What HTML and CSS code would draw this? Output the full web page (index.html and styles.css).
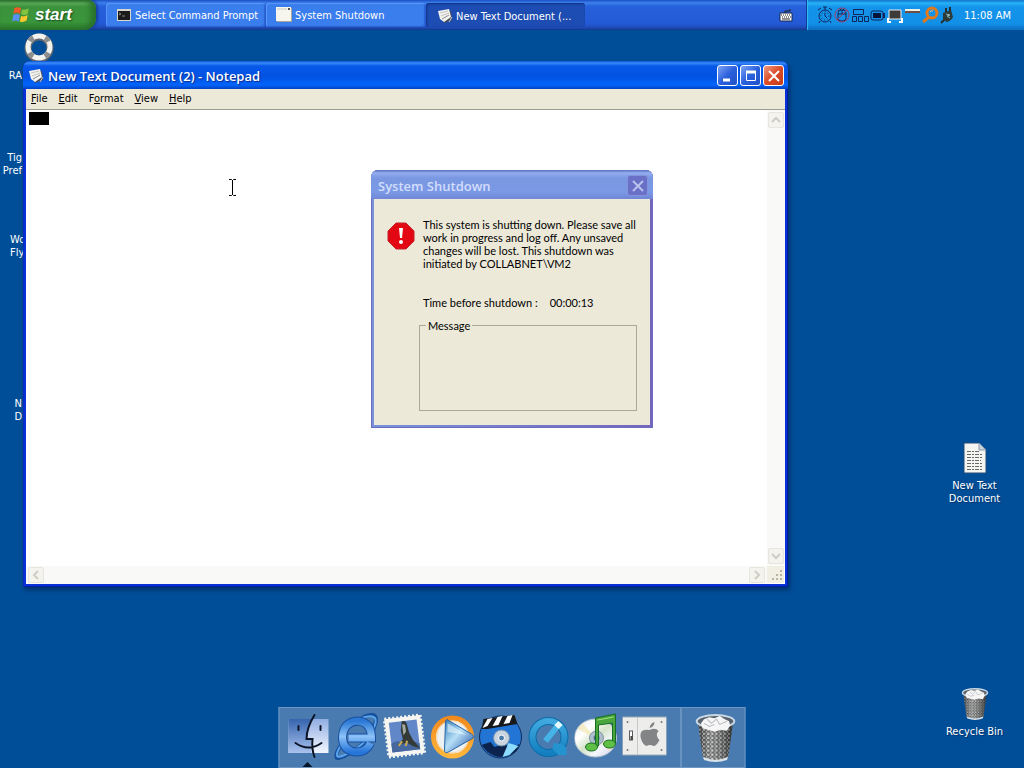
FILE: index.html
```
<!DOCTYPE html>
<html lang="en">
<head>
  <meta charset="UTF-8">
  <title>Desktop</title>
  <meta name="viewport" content="width=device-width, initial-scale=1.0">
  <link rel="stylesheet" href="styles.css">
</head>
<body>

  <!-- shared drawings -->
  <svg class="defs" width="0" height="0" aria-hidden="true">
    <defs>
      <pattern id="mesh" width="4" height="4" patternUnits="userSpaceOnUse">
        <rect width="4" height="4" fill="#c4c4c0"/>
        <path d="M0 0h3v2h-3zM2 2h2v2h-2z" fill="#303235"/>
      </pattern>
      <linearGradient id="shade">
        <stop offset="0" stop-color="#222" stop-opacity=".4"/>
        <stop offset=".35" stop-color="#fff" stop-opacity=".3"/>
        <stop offset="1" stop-color="#111" stop-opacity=".6"/>
      </linearGradient>
      <linearGradient id="face" x2="0" y2="1">
        <stop offset="0" stop-color="#3664ae"/>
        <stop offset="1" stop-color="#a9c2ed"/>
      </linearGradient>
      <linearGradient id="face2" x2="0" y2="1">
        <stop offset="0" stop-color="#91aee2"/>
        <stop offset="1" stop-color="#f2f6ff"/>
      </linearGradient>
      <linearGradient id="ie" x2="0" y2="1">
        <stop offset="0" stop-color="#2b78d5"/>
        <stop offset=".5" stop-color="#8cc2f8"/>
        <stop offset="1" stop-color="#2675d9"/>
      </linearGradient>
      <linearGradient id="orange" x2="0" y2="1">
        <stop offset="0" stop-color="#f08a1c"/>
        <stop offset="1" stop-color="#ffb63d"/>
      </linearGradient>
      <linearGradient id="play" x2="1" y2="1">
        <stop offset="0" stop-color="#2e78b5"/>
        <stop offset=".45" stop-color="#b7dff7"/>
        <stop offset="1" stop-color="#1b4fa5"/>
      </linearGradient>
      <linearGradient id="qt" x2="0" y2="1">
        <stop offset="0" stop-color="#3fa9df"/>
        <stop offset="1" stop-color="#137fc0"/>
      </linearGradient>
      <linearGradient id="cd" x2="1" y2="1">
        <stop offset="0" stop-color="#e2e8ef"/>
        <stop offset=".3" stop-color="#fff"/>
        <stop offset=".5" stop-color="#d5e4c8"/>
        <stop offset=".7" stop-color="#f4f7fc"/>
        <stop offset="1" stop-color="#cfc7e6"/>
      </linearGradient>
      <symbol id="trash" viewBox="0 0 40 46">
        <path d="M3 7l5 35q12 6 24 0l5-35z" fill="url(#mesh)"/>
        <path d="M3 7l5 35q12 6 24 0l5-35z" fill="url(#shade)"/>
        <path d="M8 41q12 6 24 0l-1 3q-11 4-22 0z" fill="#d9e3ea"/>
        <ellipse cx="20" cy="7" rx="18" ry="6" fill="#59636e" stroke="#c8d8e4" stroke-width="2"/>
        <path d="M6 9l3-4 5-2 5 1 5-2 5 3 4 2 1 4-3 5-6-1-6 2-6-2-5-1z" fill="#f6f6f6"/>
        <path d="M12 5l4 4 5-4 3 5 7-3M9 9l5 3 5-2" fill="none" stroke="#b9bcc0"/>
      </symbol>
      <symbol id="notepad" viewBox="0 0 16 16">
        <path d="M3 5l11-2 1 9-8 3z" fill="#4b4f55"/>
        <path d="M1 3l11-2 2 8-7 5-4-3z" fill="#f2f2f0"/>
        <path d="M3 5l8-2M4 8l8-3" stroke="#c4c2be"/>
        <path d="M5 11l7-4" stroke="#8d8b88"/>
        <path d="M12 14l3-5" stroke="#c9c9c9"/>
      </symbol>
    </defs>
  </svg>

  <header class="taskbar">
    <button class="start" type="button">
      <svg width="20" height="20" viewBox="0 0 18 18" aria-hidden="true">
        <path d="M3 3q3-2 6 0L8 8q-3-2-6 0z" fill="#ef5a26"/>
        <path d="M10 4q3 1 6-1l-1 5q-3 2-6 0z" fill="#82c341"/>
        <path d="M2 9q3-2 6 0l-1 6q-3-2-6 0z" fill="#5a90f0"/>
        <path d="M9 10q3 1 6-1l-1 5q-3 2-6 1z" fill="#fcc72c"/>
      </svg>
      start
    </button>

    <nav class="tasks" aria-label="Windows">
      <button class="task" type="button">
        <svg width="16" height="16" viewBox="0 0 16 16" aria-hidden="true">
          <rect x="1" y="2" width="14" height="12" fill="#d8d8d0"/>
          <rect x="2" y="4" width="12" height="9" fill="#1b1b1b"/>
          <path d="M3 6l2 1-2 1M6 9h3" fill="none" stroke="#888"/>
        </svg>
        <span>Select Command Prompt</span>
      </button>
      <button class="task" type="button">
        <svg width="16" height="16" viewBox="0 0 16 16" aria-hidden="true">
          <rect x="1" y="1" width="15" height="14" fill="#a7a698"/>
          <rect width="15" height="14" fill="#f7f6ee"/>
          <path d="M1 2h10" stroke="#e0dfd5" stroke-width="2"/>
          <path d="M12 2h2" stroke="#555" stroke-width="2"/>
        </svg>
        <span>System Shutdown</span>
      </button>
      <button class="task active" type="button">
        <svg width="16" height="16" aria-hidden="true"><use href="#notepad"/></svg>
        <span>New Text Document (...</span>
      </button>
    </nav>

    <svg class="keyboard" width="14" height="14" viewBox="0 0 14 14" aria-hidden="true">
      <path d="M6 5V3h5V1" fill="none" stroke="#222"/>
      <path d="M1 5h12v8H1z" fill="#fff" stroke="#17264d"/>
      <path d="M2 7h10M3 9h10" stroke="#222" stroke-dasharray="1 1"/>
      <path d="M3 11h8" stroke="#222"/>
    </svg>

    <div class="tray">
      <svg width="16" height="18" viewBox="0 0 16 18" fill="none" stroke="#10245a" aria-hidden="true">
        <circle cx="8" cy="10" r="6"/>
        <circle cx="8" cy="10" r="4" stroke-dasharray="1 2"/>
        <path d="M6 1h4M8 1v3M1 4l3-2M12 2l3 2M8 7v3l2 2M3 15l-1 2M13 15l1 2"/>
      </svg>
      <svg width="16" height="18" viewBox="0 0 16 18" fill="none" stroke="#10245a" aria-hidden="true">
        <rect x="4" y="4" width="8" height="11" rx="3"/>
        <path d="M4 8h8M8 4v4M5 2l2 2M11 2L9 4"/>
        <circle cx="8" cy="9" r="7" stroke="#a23a68"/>
        <path d="M3 14L13 4" stroke="#a23a68"/>
      </svg>
      <svg width="18" height="18" viewBox="0 0 18 18" fill="none" stroke="#10245a" aria-hidden="true">
        <path d="M2.500 3.500h10v5h-10zM1.500 10.500h4v5h-4zM7.500 10.500h4v5h-4zM13.500 10.500h4v5h-4z"/>
      </svg>
      <svg width="16" height="18" viewBox="0 0 16 18" aria-hidden="true">
        <rect x="1" y="5" width="12" height="9" rx="2" fill="none" stroke="#10245a"/>
        <rect x="3" y="7" width="8" height="5" fill="#06143a"/>
        <path d="M14 7v5" stroke="#10245a" stroke-width="2"/>
      </svg>
      <svg width="16" height="18" viewBox="0 0 16 18" aria-hidden="true">
        <path d="M2 4h12v9H2z" fill="#3c3b39" stroke="#eee"/>
        <path d="M1 12v4h3M15 12v4h-3" fill="none" stroke="#fff" stroke-width="2"/>
      </svg>
      <svg width="16" height="18" viewBox="0 0 16 18" aria-hidden="true">
        <path d="M1 4h15" stroke="#f0f0ea" stroke-width="2"/>
        <path d="M1 6h15" stroke="#6b5040" stroke-width="2"/>
      </svg>
      <svg width="18" height="18" viewBox="0 0 18 18" fill="none" stroke="#e07a1b" aria-hidden="true">
        <circle cx="11" cy="7" r="5" stroke-width="3"/>
        <path d="M8 11l-6 5" stroke-width="3"/>
        <path d="M9 6q1-2 3-1" stroke="#f9c07e"/>
      </svg>
      <svg width="14" height="18" viewBox="0 0 14 18" aria-hidden="true">
        <path d="M3 7l8-3 2 7q-2 4-6 5l-4-2z" fill="#2c3a38"/>
        <path d="M6 6V2M10 5V1M4 14l-3 3" stroke="#26302e" stroke-width="2"/>
        <path d="M6 8l4 1-3 1 3 2" fill="none" stroke="#93b9bd"/>
      </svg>
      <time class="clock">11:08 AM</time>
    </div>
  </header>

  <main class="desktop">
    <svg class="ring" width="30" height="30" viewBox="0 0 30 30" fill="none" aria-hidden="true">
      <circle cx="15" cy="15" r="11" stroke="#63686e" stroke-width="7"/>
      <circle cx="15" cy="14" r="11" stroke="#f2f2ef" stroke-width="5"/>
      <circle cx="15" cy="14" r="11" stroke="#8b8d8f" stroke-width="5" stroke-dasharray="5 12.300" stroke-dashoffset="-6"/>
    </svg>
    <p class="side-label side-a">RA</p>
    <p class="side-label side-b">Tig<br>Pref</p>
    <p class="side-label side-c">Wo<br>Fly</p>
    <p class="side-label side-d">N<br>D</p>

    <a class="shortcut document" href="#">
      <svg width="26" height="32" viewBox="0 0 26 32" aria-hidden="true">
        <path d="M2 1h15l7 7v23H2z" fill="#f4f4f1" stroke="#274d77"/>
        <path d="M17 1v7h7z" fill="#c6d3df" stroke="#8f9ba6"/>
        <path d="M5 9.500h12M5 12.500h15M5 15.500h16M5 18.500h14M5 21.500h16M5 24.500h15M5 27.500h16" stroke="#66686a" stroke-dasharray="4 1 2 1"/>
      </svg>
      <span>New Text<br>Document</span>
    </a>
    <a class="shortcut recycle" href="#">
      <svg width="28" height="32" aria-hidden="true"><use href="#trash"/></svg>
      <span>Recycle Bin</span>
    </a>

    <section class="window notepad" aria-labelledby="notepad-title">
      <div class="titlebar">
        <svg width="16" height="16" aria-hidden="true"><use href="#notepad"/></svg>
        <h1 id="notepad-title">New Text Document (2) - Notepad</h1>
        <button class="control" type="button" aria-label="Minimize">
          <svg width="18" height="18" viewBox="0 0 18 18"><path d="M4 13h7" stroke="#fff" stroke-width="3"/></svg>
        </button>
        <button class="control" type="button" aria-label="Maximize">
          <svg width="18" height="18" viewBox="0 0 18 18" fill="none" stroke="#fff"><path d="M4.500 4.500h9v9h-9z"/><path d="M4 5h10" stroke-width="3"/></svg>
        </button>
        <button class="control close" type="button" aria-label="Close">
          <svg width="18" height="18" viewBox="0 0 18 18"><path d="M4 4l10 10M14 4L4 14" stroke="#fff" stroke-width="2"/></svg>
        </button>
      </div>
      <nav class="menu" aria-label="Menu">
        <button type="button"><u>F</u>ile</button>
        <button type="button"><u>E</u>dit</button>
        <button type="button">F<u>o</u>rmat</button>
        <button type="button"><u>V</u>iew</button>
        <button type="button"><u>H</u>elp</button>
      </nav>
      <div class="editor">
        <textarea aria-label="Text" spellcheck="false"></textarea>
        <div class="scroll vertical">
          <button type="button" aria-label="Scroll up" disabled><svg width="12" height="12" viewBox="0 0 12 12"><path d="M2 8l4-4 4 4"/></svg></button>
          <button type="button" aria-label="Scroll down" disabled><svg width="12" height="12" viewBox="0 0 12 12"><path d="M2 4l4 4 4-4"/></svg></button>
        </div>
        <div class="scroll">
          <button type="button" aria-label="Scroll left" disabled><svg width="12" height="12" viewBox="0 0 12 12"><path d="M8 2L4 6l4 4"/></svg></button>
          <button type="button" aria-label="Scroll right" disabled><svg width="12" height="12" viewBox="0 0 12 12"><path d="M4 2l4 4-4 4"/></svg></button>
        </div>
        <svg class="grip" width="17" height="17" viewBox="0 0 17 17" aria-hidden="true">
          <path d="M13 4h2v2h-2zM9 8h2v2H9zM13 8h2v2h-2zM5 12h2v2H5zM9 12h2v2H9zM13 12h2v2h-2z" fill="#b8b4a2"/>
        </svg>
        <span class="block-cursor"></span>
      </div>
    </section>

    <section class="window dialog" role="dialog" aria-labelledby="dialog-title">
      <div class="titlebar">
        <h2 id="dialog-title">System Shutdown</h2>
        <button class="control" type="button" aria-label="Close" disabled>
          <svg width="18" height="18" viewBox="0 0 18 18"><path d="M4 4l10 10M14 4L4 14" stroke="#b9c1ee" stroke-width="2"/></svg>
        </button>
      </div>
      <div class="dialog-body">
        <svg width="28" height="28" viewBox="0 0 28 28" aria-hidden="true">
          <path d="M9 1h10l8 8v10l-8 8H9l-8-8V9z" fill="#e30613" stroke="#c3202a"/>
          <path d="M12 6h4l-1 10h-2z" fill="#fff"/>
          <circle cx="14" cy="20" r="2" fill="#fff"/>
        </svg>
        <div class="dialog-text">
          <p>This system is shutting down. Please save all<br>work in progress and log off. Any unsaved<br>changes will be lost. This shutdown was<br>initiated by COLLABNET\VM2</p>
          <p class="countdown"><span>Time before shutdown :</span><span>00:00:13</span></p>
          <fieldset>
            <legend>Message</legend>
          </fieldset>
        </div>
      </div>
    </section>

    <svg class="pointer" width="9" height="17" viewBox="0 0 9 17" fill="none" stroke="#000" aria-hidden="true">
      <path d="M1 .5h2.500l1 1 1-1H8M1 16.500h2.500l1-1 1 1H8M4.500 1v15"/>
    </svg>

    <nav class="dock" aria-label="Dock">
      <button class="running" type="button" aria-label="Finder">
        <svg width="44" height="48" viewBox="0 0 44 48">
          <path d="M2 7h40v34H2z" fill="url(#face2)"/>
          <path d="M2 7h23q-5 11-5 20h5v14H2z" fill="url(#face)"/>
          <path d="M28 3q-8 13-8 24h6q-1 10 2 18M9 31q13 9 26 0M12 14v4M34 14v4" fill="none" stroke="#0b1424" stroke-width="2" stroke-linecap="round"/>
        </svg>
      </button>
      <button type="button" aria-label="Internet Explorer">
        <svg width="44" height="48" viewBox="0 0 44 48" fill="none">
          <path d="M6 34Q-5 51 10 44 36 31 41 11 44-2 27 6" stroke="#164f9c" stroke-width="4"/>
          <path d="M6 34Q-3 49 10 43 36 31 41 11 43 1 27 6" stroke="#5ba4ea" stroke-width="2"/>
          <path d="M36 31q-4 9-14 9-14-1-14-15Q9 10 23 9q14 1 14 17H14" stroke="#194f9f" stroke-width="9"/>
          <path d="M36 31q-4 9-14 9-14-1-14-15Q9 10 23 9q14 1 14 17H14" stroke="url(#ie)" stroke-width="7"/>
        </svg>
      </button>
      <button type="button" aria-label="Mail">
        <svg width="44" height="48" viewBox="0 0 44 48">
          <g transform="rotate(-7 22 24)">
            <rect x="4" y="5" width="36" height="38" fill="#f5f5f1" stroke="#f5f5f1" stroke-width="3" stroke-dasharray="2 2"/>
            <rect x="8" y="9" width="28" height="30" fill="#6287c9"/>
            <path d="M8 30q8-4 12 2l5-4 11 5v6H8z" fill="#47689f"/>
            <path d="M21 9q5-1 5 5l1 7 3 8 6 9-7-3-5-4-10 1 6-5-1-9z" fill="#343a35"/>
            <path d="M21 12l3 1v7l-3 3z" fill="#a4aaa0"/>
            <path d="M24 29l-2 5M19 29l-4 4" stroke="#c9ab58" stroke-width="2"/>
          </g>
        </svg>
      </button>
      <button type="button" aria-label="Media Player">
        <svg width="44" height="48" viewBox="0 0 44 48">
          <circle cx="22" cy="25" r="19" fill="#edf1f2" stroke="url(#orange)" stroke-width="5"/>
          <circle cx="22" cy="25" r="16" fill="none" stroke="#f9d6a2"/>
          <path d="M15 9q1-3 4 0l22 13q4 3 0 5L18 40q-4 2-4-2z" fill="url(#play)" stroke="#2865a5"/>
          <path d="M17 11l19 12-19-3z" fill="#e7f8ff" opacity=".6"/>
        </svg>
      </button>
      <button type="button" aria-label="DVD">
        <svg width="44" height="48" viewBox="0 0 44 48">
          <circle cx="22" cy="25" r="21" fill="#2275d4" stroke="#102c57"/>
          <path d="M3 33l9-3 4 5 10-3 6 4 9-4-3 7q-16 12-30 0z" fill="#0c234d"/>
          <path d="M30 31l10 3-9 9-7 2z" fill="#8ddcff"/>
          <circle cx="23" cy="26" r="8" fill="#cad4df" stroke="#708eaf"/>
          <circle cx="23" cy="26" r="3" fill="#497ba8" stroke="#fff"/>
          <path d="M3 17L5 7 36 3l3 9L9 17z" fill="#17191d"/>
          <path d="M9 7l5-1-5 8-5 2zM19 5l5-1-4 9-6 1zM29 4l5-1-3 8-6 1z" fill="#fff"/>
        </svg>
      </button>
      <button type="button" aria-label="QuickTime">
        <svg width="44" height="48" viewBox="0 0 44 48" fill="none">
          <circle cx="22" cy="25" r="16" stroke="#0d6ba8" stroke-width="8"/>
          <circle cx="22" cy="25" r="16" stroke="url(#qt)" stroke-width="6"/>
          <path d="M27 31l8 1 5 4v7h-8l-6-6z" fill="#2494d0"/>
          <path d="M19 29L31 14" stroke="#45b3e5" stroke-width="6"/>
          <path d="M30 15l4-4" stroke="#e4f9ff" stroke-width="6"/>
        </svg>
      </button>
      <button type="button" aria-label="iTunes">
        <svg width="44" height="48" viewBox="0 0 44 48">
          <ellipse cx="21" cy="26" rx="21" ry="19" fill="url(#cd)" stroke="#b3c1ce"/>
          <path d="M21 26L3 17l5-6zM21 26l19 7-5 6z" fill="#f2e4a4" opacity=".6"/>
          <circle cx="22" cy="26" r="7" fill="#aebdcc" stroke="#8195aa"/>
          <circle cx="22" cy="26" r="3" fill="#496f98"/>
          <path d="M21 6l20-4v29h-3V11l-14 2v21h-3z" fill="#48a63c" stroke="#176d24"/>
          <ellipse cx="17" cy="35" rx="6" ry="4" fill="#60bf45" stroke="#176d24"/>
          <ellipse cx="35" cy="32" rx="6" ry="4" fill="#60bf45" stroke="#176d24"/>
          <path d="M23 8l16-3" stroke="#a8df7f"/>
        </svg>
      </button>
      <button type="button" aria-label="System Preferences">
        <svg width="44" height="48" viewBox="0 0 44 48">
          <rect y="5" width="44" height="38" fill="#ededec" stroke="#9eabb5"/>
          <path d="M15 5v38" stroke="#c7cacc"/>
          <rect x="7" y="19" width="3" height="9" fill="#fff" stroke="#565a5f"/>
          <path d="M8 24h2v4h-2z" fill="#444"/>
          <g fill="#777"><circle cx="5" cy="10" r="1"/><circle cx="39" cy="10" r="1"/><circle cx="5" cy="38" r="1"/><circle cx="39" cy="38" r="1"/></g>
          <path d="M27 16q1-5 5-6 0 5-5 6zM27 18q6-3 9 1-4 4 1 9-3 6-6 6-4-2-7 0-4-1-6-9-1-9 9-7z" fill="#828486"/>
        </svg>
      </button>
      <button class="trash" type="button" aria-label="Trash">
        <svg width="44" height="48"><use href="#trash"/></svg>
      </button>
    </nav>
  </main>

</body>
</html>
```
FILE: styles.css
```
* {
  box-sizing: border-box;
}
body {
  display: flex;
  flex-direction: column;
  height: 100vh;
  margin: 0;
  overflow: hidden;
  background: #004e98;
  font-family: Tahoma, "DejaVu Sans Condensed", sans-serif;
  font-size: 11px;
  line-height: 13px;
}
button {
  margin: 0;
  padding: 0;
  border: 0;
  background: none;
  color: inherit;
  font: inherit;
}
svg {
  display: block;
  flex: none;
}
h1, h2, p {
  margin: 0;
}
.defs {
  position: absolute;
}

/* Taskbar */
.taskbar {
  display: flex;
  flex: none;
  height: 30px;
  background: linear-gradient(#1c4fc4 0, #3c82ee 3px, #2761dc 6px, #2459d6 24px, #1d49b4 28px, #113886 30px);
  color: #fff;
}
.start {
  display: flex;
  align-items: center;
  gap: 4px;
  width: 96px;
  padding: 0 0 0 11px;
  border-radius: 0 8px 12px 0;
  background: linear-gradient(#2b6f2b 0, #5fae5c 3px, #3c923c 7px, #3a963b 22px, #2a762b 30px);
  box-shadow: inset -5px 0 6px #286f2b, 2px 0 3px #153e9c;
  font: italic bold 17px "Liberation Sans", sans-serif;
  text-shadow: 1px 1px 2px #17461b;
}
.tasks {
  display: flex;
  flex: 1;
  gap: 1px;
  padding: 3px 0 3px 10px;
}
.task {
  display: flex;
  align-items: center;
  gap: 3px;
  flex: 0 1 159px;
  min-width: 0;
  padding: 0 10px;
  border-radius: 3px;
  background: #3a7ded;
  box-shadow: inset 1px 1px 1px #5b99f7, inset -1px -1px 1px #2b63cf;
  white-space: nowrap;
}
.task.active {
  background: #1d4cb2;
  box-shadow: inset 1px 1px 2px #113381;
  padding: 2px 10px 0 11px;
}
.keyboard {
  align-self: center;
  margin-right: 13px;
}
.tray {
  display: flex;
  align-items: center;
  gap: 1px;
  padding: 0 13px 0 10px;
  border-left: 1px solid #123c91;
  background: linear-gradient(#0d6ac9 0, #28b3f5 3px, #1493ea 7px, #1290e8 24px, #0d69bc 30px);
  box-shadow: inset 1px 0 1px #35bdf7;
}
.clock {
  margin-left: auto;
  padding-left: 9px;
  white-space: nowrap;
}

/* Desktop */
.desktop {
  position: relative;
  flex: 1;
  color: #fff;
}
.ring {
  position: absolute;
  left: 24px;
  top: 3px;
}
.side-label {
  position: absolute;
  left: 0;
  width: 22px;
  text-align: right;
}
.side-a {
  top: 39px;
}
.side-b {
  top: 121px;
}
.side-c {
  top: 203px;
  left: 10px;
  text-align: left;
}
.side-d {
  top: 367px;
}
.shortcut {
  position: absolute;
  right: 12px;
  display: flex;
  flex-direction: column;
  align-items: center;
  gap: 5px;
  width: 75px;
  color: #fff;
  text-align: center;
  text-decoration: none;
  text-shadow: 1px 1px 1px #00336b;
  white-space: nowrap;
}
.document {
  top: 412px;
}
.recycle {
  top: 658px;
}

/* Windows */
.window {
  position: absolute;
  display: flex;
  flex-direction: column;
  border-radius: 7px 7px 0 0;
}
.titlebar {
  display: flex;
  align-items: center;
  gap: 2px;
}
.titlebar h1,
.titlebar h2 {
  flex: 1;
  font: 600 13px/16px "Trebuchet MS", "Open Sans", sans-serif;
  white-space: nowrap;
}
.control {
  display: grid;
  place-items: center;
  width: 21px;
  height: 21px;
  border: 1px solid #fff;
  border-radius: 3px;
  background: linear-gradient(135deg, #7fa4f5, #2b60dd 50%, #2152c5);
}
.control.close {
  background: linear-gradient(135deg, #ef9a80, #db4c28 50%, #c23c18);
}
.notepad {
  inset: 31px 236px 181px 23px;
  padding: 0 3px 3px;
  background: #0831d9;
  box-shadow: inset 1px 0 #0a2bbd, inset -1px -1px #001ea0, 2px 3px 4px rgba(0, 20, 70, .5);
}
.notepad .titlebar {
  height: 28px;
  margin: 0 -3px;
  padding: 1px 4px 0 5px;
  border-radius: 7px 7px 0 0;
  background: linear-gradient(#0a52d8 0, #3b8cf9 2px, #0758e8 5px, #0253e2 16px, #0264fb 24px, #0241c2 28px);
}
.notepad h1 {
  padding-left: 2px;
  text-shadow: 1px 1px 1px #0a2c8c;
}
.menu {
  display: flex;
  gap: 11px;
  height: 21px;
  padding: 0 5px 2px;
  border-bottom: 1px solid #9d9c91;
  background: #ece9d8;
  color: #000;
}
.editor {
  position: relative;
  display: grid;
  grid-template: 1fr 18px / 1fr 18px;
  flex: 1;
  background: #fff;
}
.editor textarea {
  padding: 2px 3px;
  border: 0;
  outline: 0;
  overflow: hidden;
  resize: none;
  font: 12px "Liberation Mono", monospace;
}
.block-cursor {
  position: absolute;
  left: 3px;
  top: 2px;
  width: 20px;
  height: 13px;
  background: #000;
}
.scroll {
  display: flex;
  justify-content: space-between;
  padding: 1px 2px;
  background: #f9f9f7;
}
.scroll.vertical {
  flex-direction: column;
  padding: 2px 1px;
}
.scroll button {
  display: grid;
  place-items: center;
  width: 16px;
  height: 16px;
  border: 1px solid #e6e5de;
  border-radius: 2px;
  background: #f4f3ee;
}
.scroll path {
  fill: none;
  stroke: #cfcdc3;
  stroke-width: 2;
}
.grip {
  background: #f1efe4;
}

.dialog {
  left: 371px;
  top: 140px;
  width: 282px;
  padding: 0 3px 3px;
  background: linear-gradient(90deg, #7a92dc, #7565be);
  box-shadow: inset 0 0 0 1px #6a6ebd;
}
.dialog .titlebar {
  height: 29px;
  margin: 0 -3px;
  padding: 2px 5px 0 7px;
  border-radius: 7px 7px 0 0;
  background: linear-gradient(#596fbe 0, #93adf1 3px, #7a97e1 8px, #7b99e5 22px, #7186d7 29px);
  color: #d3defc;
}
.dialog .control {
  border-color: #8494dc;
  background: #6970c5;
}
.dialog-body {
  display: flex;
  gap: 8px;
  padding: 19px 13px 14px 13px;
  background: #ece9d8;
  color: #000;
  font-family: "Microsoft Sans Serif", Lato, sans-serif;
}
.dialog-body > svg {
  margin-top: 4px;
}
.dialog-text {
  flex: 1;
  min-width: 0;
  white-space: nowrap;
}
.countdown {
  display: flex;
  gap: 12px;
  margin: 26px 0 10px;
}
.dialog fieldset {
  height: 92px;
  margin: 0 0 0 -4px;
  padding: 0 6px;
  border: 1px solid #aca899;
}
.dialog legend {
  padding: 0 2px;
}
.pointer {
  position: absolute;
  left: 228px;
  top: 149px;
}

/* Dock */
.dock {
  position: absolute;
  left: 50%;
  bottom: 0;
  display: flex;
  align-items: center;
  gap: 4px;
  height: 61px;
  padding: 0 7px 4px 7px;
  border: 1px solid #6d97c4;
  background: #4a7bb0;
  transform: translateX(-50%);
}
.dock button {
  position: relative;
}
.dock .running::after {
  content: "";
  position: absolute;
  left: 16px;
  bottom: -7px;
  border: 5px solid transparent;
  border-top: 0;
  border-bottom-color: #071426;
}
.dock .trash {
  display: flex;
  align-items: center;
  align-self: stretch;
  margin: 0 0 -4px 10px;
  padding-left: 12px;
  border-left: 1px solid #86a9d0;
}
```
